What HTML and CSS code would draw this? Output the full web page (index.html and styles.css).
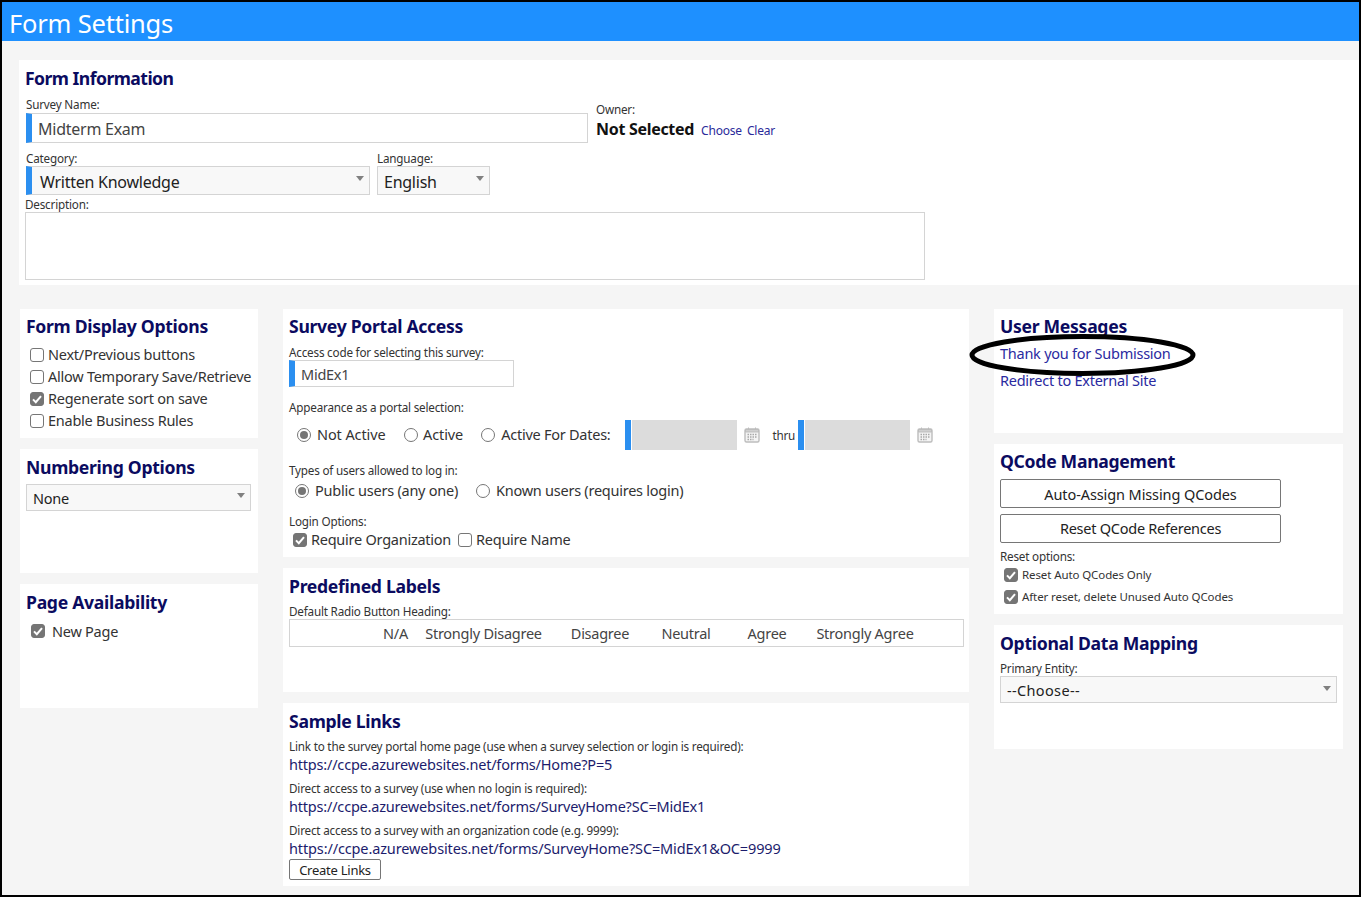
FILE: index.html
```html
<!DOCTYPE html>
<html lang="en">
<head>
<meta charset="utf-8">
<title>Form Settings</title>
<link rel="stylesheet" href="styles.css">
</head>
<body>
<div class="frame">
  <header class="page-head">Form Settings</header>
  <main class="page-main">
    <section class="panel info raised">
      <h2>Form Information</h2>
      <div class="info-row first">
        <div class="field name-field">
          <label class="lbl">Survey Name:</label>
          <div class="box req name-box">Midterm Exam</div>
        </div>
        <div class="owner">
          <label class="lbl">Owner:</label>
          <div class="owner-line"><b>Not Selected</b><a class="small-link">Choose</a><a class="small-link">Clear</a></div>
        </div>
      </div>
      <div class="info-row second">
        <div class="field cat-field">
          <label class="lbl">Category:</label>
          <div class="box req sel cat-box">Written Knowledge</div>
        </div>
        <div class="field lang-field">
          <label class="lbl">Language:</label>
          <div class="box sel lang-box">English</div>
        </div>
      </div>
      <label class="lbl desc-lbl">Description:</label>
      <div class="desc"></div>
    </section>

    <div class="columns">
      <div class="col left">
        <section class="panel form-display raised">
          <h2>Form Display Options</h2>
          <div class="opt"><span class="check"></span>Next/Previous buttons</div>
          <div class="opt"><span class="check"></span>Allow Temporary Save/Retrieve</div>
          <div class="opt"><span class="check on"><svg viewBox="0 0 14 14"><path d="M3 7.4 5.800 10.200 11 4.200"/></svg></span>Regenerate sort on save</div>
          <div class="opt"><span class="check"></span>Enable Business Rules</div>
        </section>
        <section class="panel">
          <h2>Numbering Options</h2>
          <div class="box sel num-box">None</div>
        </section>
        <section class="panel">
          <h2>Page Availability</h2>
          <div class="opt page-opt"><span class="check on"><svg viewBox="0 0 14 14"><path d="M3 7.4 5.800 10.200 11 4.200"/></svg></span>New Page</div>
        </section>
      </div>

      <div class="col mid">
        <section class="panel portal raised">
          <h2>Survey Portal Access</h2>
          <label class="lbl code-lbl">Access code for selecting this survey:</label>
          <div class="box req code-box">MidEx1</div>
          <label class="lbl appear-lbl">Appearance as a portal selection:</label>
          <div class="radio-row appear">
            <span class="radio on"></span><span class="rt t-notactive">Not Active</span>
            <span class="radio r-active"></span><span class="rt t-active">Active</span>
            <span class="radio"></span><span class="rt t-dates">Active For Dates:</span>
            <span class="date"></span>
            <svg class="cal" viewBox="0 0 18 18"><path class="cal-body" d="M2 4.500a1.500 1.500 0 0 1 1.500-1.500h11a1.500 1.500 0 0 1 1.500 1.500v10a1.500 1.500 0 0 1-1.500 1.500h-11a1.500 1.500 0 0 1-1.500-1.500z"/><path class="cal-top" d="M2.500 3.500h13v2.500h-13zM5.500 1.500v2M12.500 1.500v2"/><path class="cal-dots" d="M4.500 8.500h9M4.500 11h9M4.500 13.500h6"/></svg>
            <span class="thru">thru</span>
            <span class="date"></span>
            <svg class="cal" viewBox="0 0 18 18"><path class="cal-body" d="M2 4.500a1.500 1.500 0 0 1 1.500-1.500h11a1.500 1.500 0 0 1 1.500 1.500v10a1.500 1.500 0 0 1-1.500 1.500h-11a1.500 1.500 0 0 1-1.500-1.500z"/><path class="cal-top" d="M2.500 3.500h13v2.500h-13zM5.500 1.500v2M12.500 1.500v2"/><path class="cal-dots" d="M4.500 8.500h9M4.500 11h9M4.500 13.500h6"/></svg>
          </div>
          <label class="lbl types-lbl">Types of users allowed to log in:</label>
          <div class="radio-row types">
            <span class="radio on"></span><span class="rt t-public">Public users (any one)</span>
            <span class="radio"></span><span class="rt">Known users (requires login)</span>
          </div>
          <label class="lbl login-lbl">Login Options:</label>
          <div class="opt login-opt">
            <span class="check on"><svg viewBox="0 0 14 14"><path d="M3 7.4 5.800 10.200 11 4.200"/></svg></span><span class="login-t">Require Organization</span>
            <span class="check"></span>Require Name
          </div>
        </section>
        <section class="panel">
          <h2>Predefined Labels</h2>
          <label class="lbl pre-lbl">Default Radio Button Heading:</label>
          <div class="heading-box">
            <span>N/A</span><span>Strongly Disagree</span><span>Disagree</span><span>Neutral</span><span>Agree</span><span>Strongly Agree</span>
          </div>
        </section>
        <section class="panel samples">
          <h2>Sample Links</h2>
          <label class="lbl s-lbl">Link to the survey portal home page (use when a survey selection or login is required):</label>
          <a class="s-link">https://ccpe.azurewebsites.net/forms/Home?P=5</a>
          <label class="lbl s-lbl">Direct access to a survey (use when no login is required):</label>
          <a class="s-link">https://ccpe.azurewebsites.net/forms/SurveyHome?SC=MidEx1</a>
          <label class="lbl s-lbl">Direct access to a survey with an organization code (e.g. 9999):</label>
          <a class="s-link s-long">https://ccpe.azurewebsites.net/forms/SurveyHome?SC=MidEx1&amp;OC=9999</a>
          <button class="btn create">Create Links</button>
        </section>
      </div>

      <div class="col right">
        <section class="panel messages raised">
          <h2>User Messages</h2>
          <a class="msg-link first-msg">Thank you for Submission</a>
          <a class="msg-link">Redirect to External Site</a>
          <svg class="ring" viewBox="0 0 228 44"><ellipse cx="113.500" cy="22" rx="110.500" ry="18.500"/></svg>
        </section>
        <section class="panel qcode raised">
          <h2>QCode Management</h2>
          <button class="btn wide auto">Auto-Assign Missing QCodes</button>
          <button class="btn wide">Reset QCode References</button>
          <label class="lbl reset-lbl">Reset options:</label>
          <div class="opt reset-opt"><span class="check on"><svg viewBox="0 0 14 14"><path d="M3 7.4 5.800 10.200 11 4.200"/></svg></span>Reset Auto QCodes Only</div>
          <div class="opt reset-opt"><span class="check on"><svg viewBox="0 0 14 14"><path d="M3 7.4 5.800 10.200 11 4.200"/></svg></span>After reset, delete Unused Auto QCodes</div>
        </section>
        <section class="panel">
          <h2>Optional Data Mapping</h2>
          <label class="lbl entity-lbl">Primary Entity:</label>
          <div class="box sel entity-box">--Choose--</div>
        </section>
      </div>
    </div>
  </main>
</div>
</body>
</html>
```

FILE: styles.css
```css
* { box-sizing: border-box; }
html, body { margin: 0; padding: 0; }
body {
  font-family: "Noto Sans", "Open Sans", "Liberation Sans", sans-serif;
  font-size: 14.5px;
  color: #333;
  letter-spacing: -0.25px;
}
.frame {
  width: 1361px;
  height: 897px;
  border: 2px solid #000;
  background: #f5f5f5;
  overflow: hidden;
}
.page-head {
  height: 39px;
  background: #1e90ff;
  color: #fff;
  font-size: 25.5px;
  line-height: 42px;
  padding-left: 7px;
  letter-spacing: -0.2px;
}
.page-main { padding: 19px 0 0 17px; }

.panel {
  position: relative;
  background: #fff;
  min-height: 124px;
  padding: 6px;
}
h2 {
  margin: 0;
  font-size: 17.600px;
  line-height: 24px;
  font-weight: 700;
  color: #0b0b60;
  letter-spacing: -0.3px;
}
.raised h2 { margin-top: -1px; }
.lbl {
  display: block;
  font-size: 11.700px;
  line-height: 12px;
  padding-bottom: 2px;
  color: #333;
  letter-spacing: -0.2px;
}

/* Form information */
.info { height: 225px; padding: 7px 6px 0; }
.info h2 { letter-spacing: -0.55px; }
.info-row { display: flex; }
.info-row.first { margin-top: 8px; }
.field .lbl { margin-left: 1px; }
.name-field { width: 571px; }
.owner { padding-top: 5px; }
.owner-line { display: flex; align-items: baseline; line-height: 24px; }
.owner-line b { font-size: 16px; color: #111; margin-right: 7px; letter-spacing: -0.3px; }
.small-link { font-size: 12px; color: #2a2a9a; margin-right: 5px; letter-spacing: -0.2px; }
.box {
  position: relative;
  background: #fff;
  border: 1px solid #d4d4d4;
  color: #444;
}
.req { border-left: 6px solid #2b8ff0; }
.sel { background: #f8f8f8; color: #222; }
.sel::after {
  content: "";
  position: absolute;
  right: 5px;
  top: 9px;
  border: 4.500px solid transparent;
  border-top: 5px solid #808080;
  border-bottom: 0;
}
.name-box {
  margin: 1px 0 0 1px;
  width: 562px;
  height: 30px;
  line-height: 31px;
  font-size: 16px;
  padding-left: 6px;
}
.info-row.second { margin-top: 9px; }
.cat-field { width: 352px; }
.cat-box {
  margin-left: 1px;
  width: 344px;
  height: 29px;
  line-height: 30px;
  font-size: 16px;
  padding-left: 8px;
}
.lang-box {
  width: 113px;
  height: 29px;
  line-height: 30px;
  font-size: 16px;
  padding-left: 6px;
}
.lang-field .lbl { margin-left: 0; }
.desc-lbl { margin-top: 3px; }
.desc {
  width: 900px;
  height: 68px;
  border: 1px solid #d4d4d4;
}

/* Columns */
.columns { display: flex; margin: 24px 0 0 1px; column-gap: 25px; }
.col { display: flex; flex-direction: column; row-gap: 11px; }
.left { width: 238px; }
.mid { width: 686px; }
.right { width: 349px; }

.opt { display: flex; align-items: center; height: 22px; white-space: nowrap; }
.check {
  flex: none;
  width: 14px;
  height: 14px;
  margin-top: 2px;
  margin-right: 4px;
  border: 1px solid #767676;
  border-radius: 3px;
  background: #fff;
}
.check.on { background: #757575; border-color: #757575; }
.check svg { display: block; width: 14px; height: 14px; margin: -1px; }
.check svg path { fill: none; stroke: #fff; stroke-width: 2; }
.form-display { height: 129px; }
.form-display h2 { margin-bottom: 5px; }
.form-display .opt { padding-left: 4px; }
.num-box {
  width: 225px;
  height: 27px;
  margin-top: 5px;
  line-height: 27px;
  padding-left: 6px;
}
.num-box::after { top: 8px; }
.page-opt { margin-top: 6px; padding-left: 5px; }
.page-opt .check { margin-top: 0; margin-right: 7px; }

/* Portal */
.portal { height: 248px; }
.code-lbl { margin-top: 8px; }
.code-box {
  width: 225px;
  height: 27px;
  line-height: 26px;
  padding-left: 6px;
}
.appear-lbl { margin-top: 14px; }
.radio-row { display: flex; align-items: center; white-space: nowrap; }
.radio {
  flex: none;
  position: relative;
  width: 14px;
  height: 14px;
  border: 1px solid #767676;
  border-radius: 50%;
  margin-right: 6px;
  background: #fff;
}
.radio.on::after {
  content: "";
  position: absolute;
  left: 2px;
  top: 2px;
  width: 8px;
  height: 8px;
  border-radius: 50%;
  background: #757575;
}
.rt { margin-bottom: 2px; }
.appear { height: 30px; margin-top: 5px; padding-left: 8px; }
.t-notactive { margin-right: 18.500px; letter-spacing: -0.1px; }
.r-active { margin-right: 5px; }
.t-active { margin-right: 18px; letter-spacing: -0.1px; }
.t-dates { margin-right: 14px; }
.date {
  flex: none;
  width: 112px;
  height: 30px;
  border-left: 6px solid #2b8ff0;
  background: linear-gradient(to right, #fff 1px, #dcdcdc 1px);
}
.cal { width: 18px; height: 18px; margin-left: 6px; flex: none; }
.cal-body { fill: #f4f4f4; stroke: #bdbdbd; stroke-width: 1.400; }
.cal-top { fill: #cfcfcf; stroke: #bdbdbd; stroke-width: 1; }
.cal-dots { fill: none; stroke: #a8a8a8; stroke-width: 1.500; stroke-dasharray: 1.500 1; }
.thru { font-size: 11.700px; margin-left: 12px; margin-right: 3px; width: 22px; flex: none; }
.types-lbl { margin-top: 14px; }
.types { height: 20px; margin-top: 3px; padding-left: 6px; }
.t-public { margin-right: 18px; }
.login-lbl { margin-top: 14px; }
.login-opt { margin-top: -1px; padding-left: 4px; }
.login-t { margin-right: 7px; }

/* Labels */
.pre-lbl { margin-top: 7px; }
.heading-box {
  display: grid;
  grid-template-columns: 43px 133px 100px 72px 90px 106px;
  width: 675px;
  height: 28px;
  padding-left: 84px;
  border: 1px solid #d4d4d4;
  text-align: center;
  line-height: 27px;
  color: #444;
}

/* Samples */
.samples { height: 183px; }
.s-lbl { margin-top: 7px; }
.s-link {
  display: block;
  line-height: 22px;
  color: #1c1c6c;
  margin-top: -1px;
  letter-spacing: -0.2px;
}
.s-long { letter-spacing: -0.13px; }
.btn {
  display: block;
  font-family: inherit;
  letter-spacing: inherit;
  background: #fff;
  border: 1px solid #767676;
  border-radius: 2px;
  color: #222;
  padding: 0;
}
.create { width: 92px; height: 21px; font-size: 13px; padding-top: 1px; }

/* Right */
.msg-link { display: block; color: #2a2aa0; line-height: 26px; }
.first-msg { margin-top: 2px; margin-bottom: 1px; }
.ring {
  position: absolute;
  left: -25px;
  top: 24px;
  width: 228px;
  height: 44px;
  overflow: visible;
}
.ring ellipse { fill: none; stroke: #000; stroke-width: 5; }
.qcode { height: 170px; }
.qcode h2 { margin-bottom: 6px; }
.wide {
  width: 281px;
  height: 29px;
  font-size: 14.500px;
  margin-top: 6px;
  padding-bottom: 2px;
}
.qcode h2 + .wide { margin-top: 0; }
.auto { letter-spacing: -0.1px; padding-bottom: 0; }
.reset-lbl { margin-top: 7px; }
.reset-opt { padding-left: 4px; font-size: 11.500px; letter-spacing: -0.1px; }
.reset-lbl + .reset-opt { margin-top: -1px; }
.entity-lbl { margin-top: 7px; }
.entity-box {
  width: 337px;
  height: 27px;
  line-height: 27px;
  padding-left: 6px;
  letter-spacing: 0.35px;
}
```
